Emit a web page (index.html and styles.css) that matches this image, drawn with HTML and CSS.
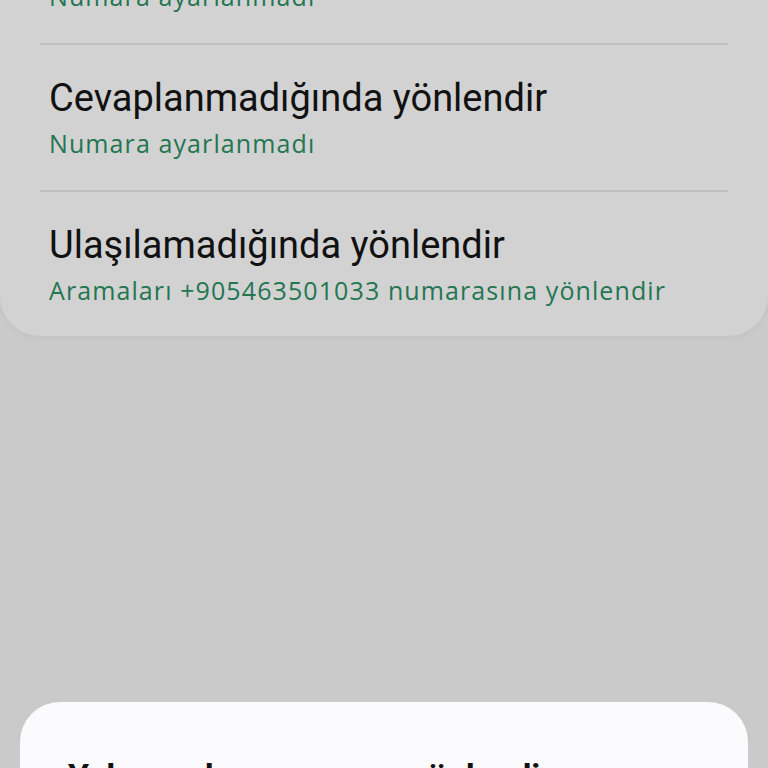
FILE: index.html
```html
<!DOCTYPE HTML>
<html lang="tr">
<head>
    <meta charset="utf-8">
    <title>Arama yönlendirme</title>
    <link rel="stylesheet" href="styles.css">
</head>
<body>
<div class="screen">
    <div class="card">
        <div class="row">
            <div class="title">Meşgulken yönlendir</div>
            <div class="sub">Numara ayarlanmadı</div>
        </div>
        <div class="row">
            <div class="title">Cevaplanmadığında yönlendir</div>
            <div class="sub">Numara ayarlanmadı</div>
        </div>
        <div class="row">
            <div class="title">Ulaşılamadığında yönlendir</div>
            <div class="sub">Aramaları +905463501033 numarasına yönlendir</div>
        </div>
    </div>
    <div class="spacer"></div>
    <div class="sheet">
        <div class="sheet-title">Yalnızca bu numaraya yönlendir</div>
    </div>
</div>
</body>
</html>
```

FILE: styles.css
```css
body {
    margin: 0;
    font-family: Roboto, "Noto Sans", sans-serif;
    background-color: #cacaca;
}
.screen {
    height: 768px;
    overflow: hidden;
    display: flex;
    flex-direction: column;
}
.card {
    margin-top: -102px;
    background-color: #d2d2d3;
    border-radius: 0 0 40px 40px;
    padding: 0 40px 0 40px;
    box-shadow: 0 2px 6px rgba(0, 0, 0, 0.04);
    flex-shrink: 0;
}
.row {
    padding: 31px 9px 0 9px;
    height: 114px;
    border-bottom: 2px solid #bfbfc0;
}
.row:last-child {
    border-bottom: none;
    height: 113px;
}
.title {
    font-size: 38px;
    line-height: 44px;
    color: #111;
}
.sub {
    margin-top: 6px;
    font-family: "Open Sans", Roboto, sans-serif;
    font-size: 25px;
    letter-spacing: 1.1px;
    line-height: 34px;
    color: #237650;
}
.spacer {
    flex: 1;
}
.sheet {
    margin: 0 20px;
    height: 66px;
    flex-shrink: 0;
    background-color: #fbfbfd;
    border-radius: 40px 40px 0 0;
    padding: 54px 48px 0 48px;
    box-sizing: border-box;
    overflow: hidden;
}
.sheet-title {
    font-size: 34px;
    font-weight: bold;
    color: #111;
    white-space: nowrap;
}
```
